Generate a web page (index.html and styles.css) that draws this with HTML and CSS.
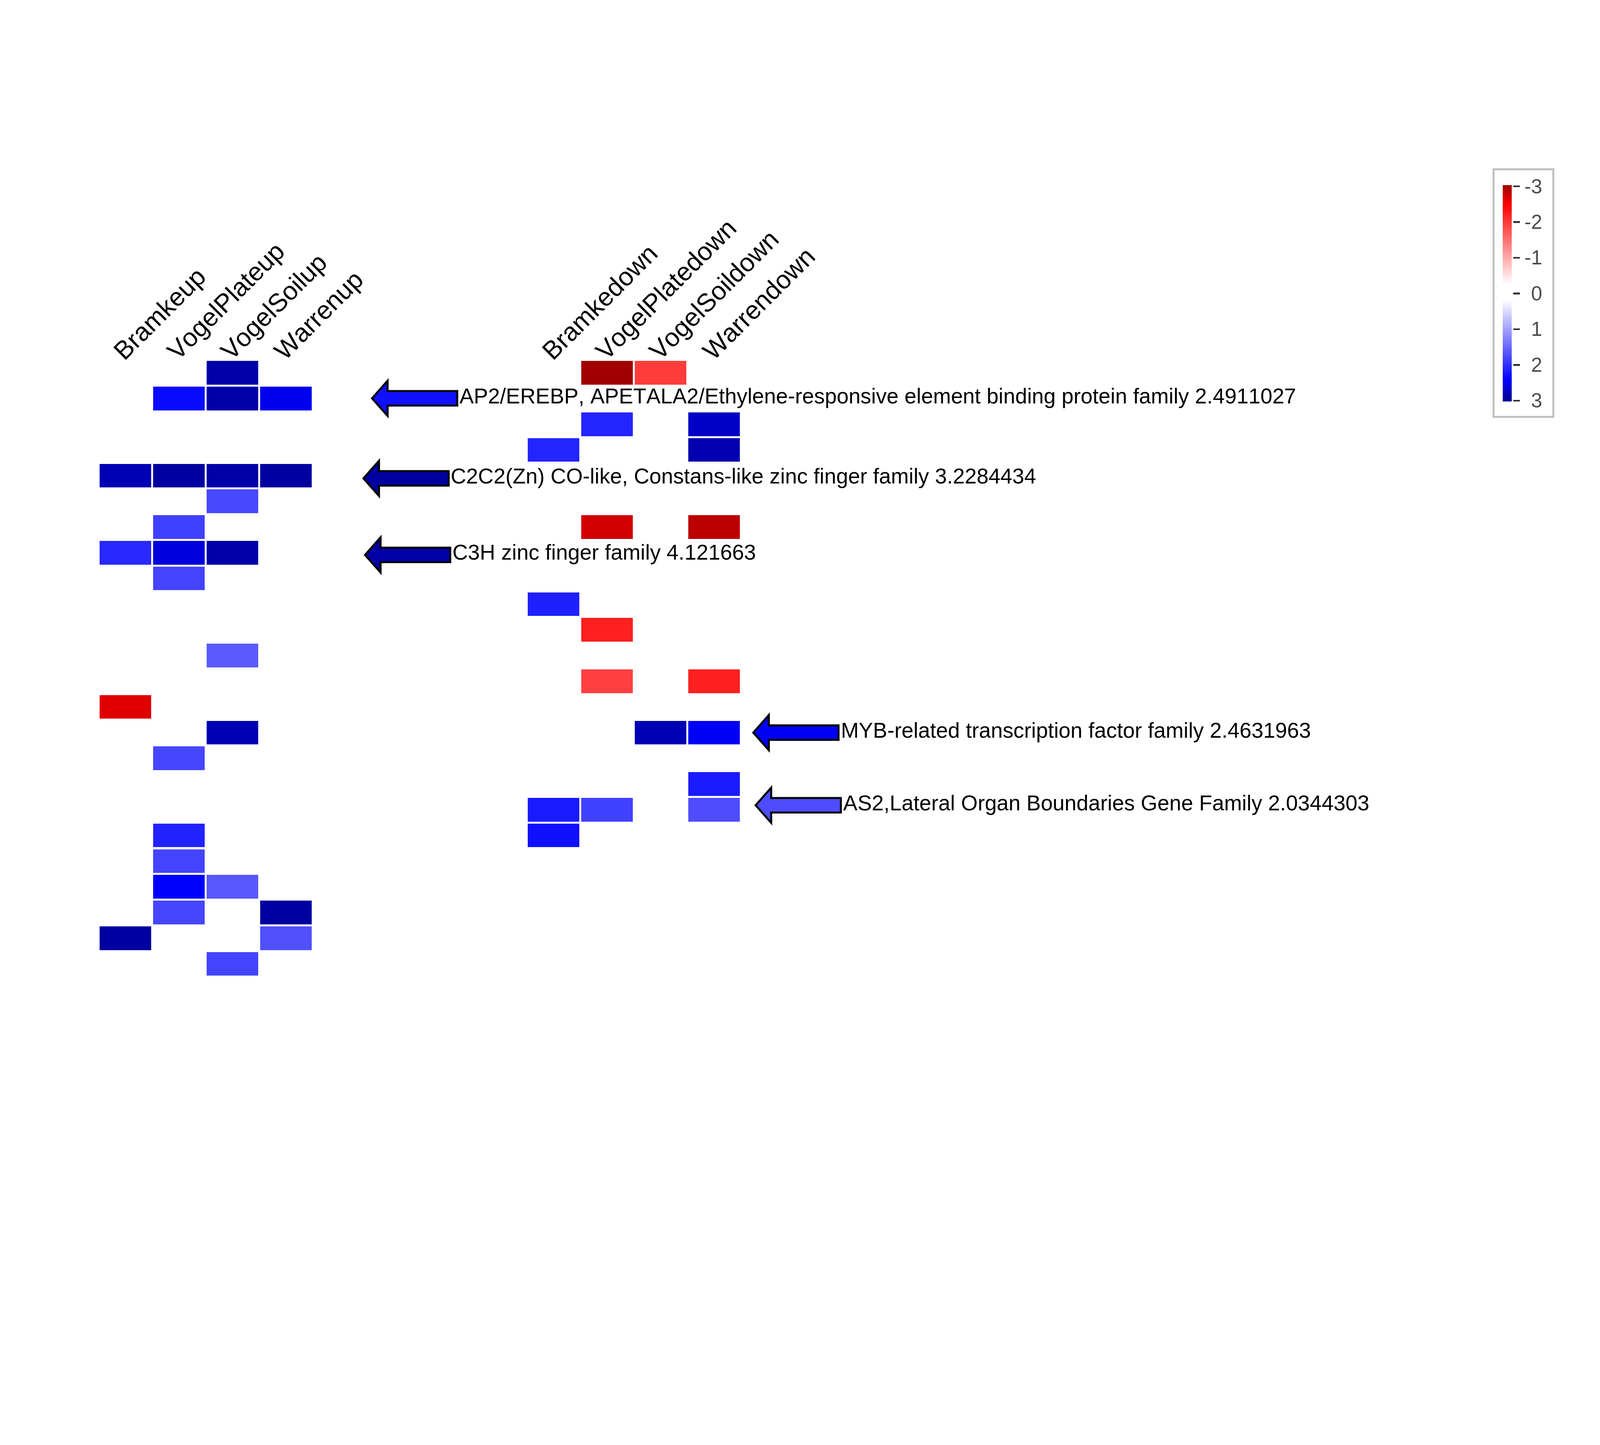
FILE: index.html
```html
<!DOCTYPE html>
<html lang="en">
<head>
<meta charset="utf-8">
<title>Heatmap</title>
<link rel="stylesheet" href="styles.css">
</head>
<body>
<div class="figure">
  <section class="panel panel-left">
    <div class="col-labels">
      <div class="col-label"><span>Bramkeup</span></div>
      <div class="col-label"><span>VogelPlateup</span></div>
      <div class="col-label"><span>VogelSoilup</span></div>
      <div class="col-label"><span>Warrenup</span></div>
    </div>
    <div class="heatmap">
      <div class="cell"></div><div class="cell"></div><div class="cell" style="background:#0000aa"></div><div class="cell"></div>
      <div class="cell"></div><div class="cell" style="background:#0a0aff"></div><div class="cell" style="background:#0000aa"></div><div class="cell" style="background:#0000ee"></div>
      <div class="cell"></div><div class="cell"></div><div class="cell"></div><div class="cell"></div>
      <div class="cell"></div><div class="cell"></div><div class="cell"></div><div class="cell"></div>
      <div class="cell" style="background:#0000b4"></div><div class="cell" style="background:#0000a0"></div><div class="cell" style="background:#0000a6"></div><div class="cell" style="background:#0000a0"></div>
      <div class="cell"></div><div class="cell"></div><div class="cell" style="background:#4848ff"></div><div class="cell"></div>
      <div class="cell"></div><div class="cell" style="background:#4040ff"></div><div class="cell"></div><div class="cell"></div>
      <div class="cell" style="background:#2828ff"></div><div class="cell" style="background:#0000dd"></div><div class="cell" style="background:#0000a8"></div><div class="cell"></div>
      <div class="cell"></div><div class="cell" style="background:#4444ff"></div><div class="cell"></div><div class="cell"></div>
      <div class="cell"></div><div class="cell"></div><div class="cell"></div><div class="cell"></div>
      <div class="cell"></div><div class="cell"></div><div class="cell"></div><div class="cell"></div>
      <div class="cell"></div><div class="cell"></div><div class="cell" style="background:#5a5aff"></div><div class="cell"></div>
      <div class="cell"></div><div class="cell"></div><div class="cell"></div><div class="cell"></div>
      <div class="cell" style="background:#e00000"></div><div class="cell"></div><div class="cell"></div><div class="cell"></div>
      <div class="cell"></div><div class="cell"></div><div class="cell" style="background:#0000b4"></div><div class="cell"></div>
      <div class="cell"></div><div class="cell" style="background:#4646ff"></div><div class="cell"></div><div class="cell"></div>
      <div class="cell"></div><div class="cell"></div><div class="cell"></div><div class="cell"></div>
      <div class="cell"></div><div class="cell"></div><div class="cell"></div><div class="cell"></div>
      <div class="cell"></div><div class="cell" style="background:#2222ff"></div><div class="cell"></div><div class="cell"></div>
      <div class="cell"></div><div class="cell" style="background:#4444ff"></div><div class="cell"></div><div class="cell"></div>
      <div class="cell"></div><div class="cell" style="background:#0000ff"></div><div class="cell" style="background:#5858ff"></div><div class="cell"></div>
      <div class="cell"></div><div class="cell" style="background:#4646ff"></div><div class="cell"></div><div class="cell" style="background:#0000a0"></div>
      <div class="cell" style="background:#0000a0"></div><div class="cell"></div><div class="cell"></div><div class="cell" style="background:#5050ff"></div>
      <div class="cell"></div><div class="cell"></div><div class="cell" style="background:#4444ff"></div><div class="cell"></div>
    </div>
  </section>

  <section class="panel panel-right">
    <div class="col-labels">
      <div class="col-label"><span>Bramkedown</span></div>
      <div class="col-label"><span>VogelPlatedown</span></div>
      <div class="col-label"><span>VogelSoildown</span></div>
      <div class="col-label"><span>Warrendown</span></div>
    </div>
    <div class="heatmap">
      <div class="cell"></div><div class="cell" style="background:#a00000"></div><div class="cell" style="background:#ff3c3c"></div><div class="cell"></div>
      <div class="cell"></div><div class="cell"></div><div class="cell"></div><div class="cell"></div>
      <div class="cell"></div><div class="cell" style="background:#2424ff"></div><div class="cell"></div><div class="cell" style="background:#0000c6"></div>
      <div class="cell" style="background:#2424ff"></div><div class="cell"></div><div class="cell"></div><div class="cell" style="background:#0000b0"></div>
      <div class="cell"></div><div class="cell"></div><div class="cell"></div><div class="cell"></div>
      <div class="cell"></div><div class="cell"></div><div class="cell"></div><div class="cell"></div>
      <div class="cell"></div><div class="cell" style="background:#d20000"></div><div class="cell"></div><div class="cell" style="background:#bd0000"></div>
      <div class="cell"></div><div class="cell"></div><div class="cell"></div><div class="cell"></div>
      <div class="cell"></div><div class="cell"></div><div class="cell"></div><div class="cell"></div>
      <div class="cell" style="background:#2020ff"></div><div class="cell"></div><div class="cell"></div><div class="cell"></div>
      <div class="cell"></div><div class="cell" style="background:#ff2020"></div><div class="cell"></div><div class="cell"></div>
      <div class="cell"></div><div class="cell"></div><div class="cell"></div><div class="cell"></div>
      <div class="cell"></div><div class="cell" style="background:#ff4040"></div><div class="cell"></div><div class="cell" style="background:#ff2020"></div>
      <div class="cell"></div><div class="cell"></div><div class="cell"></div><div class="cell"></div>
      <div class="cell"></div><div class="cell"></div><div class="cell" style="background:#0000b4"></div><div class="cell" style="background:#0000f5"></div>
      <div class="cell"></div><div class="cell"></div><div class="cell"></div><div class="cell"></div>
      <div class="cell"></div><div class="cell"></div><div class="cell"></div><div class="cell" style="background:#1a1aff"></div>
      <div class="cell" style="background:#1a1aff"></div><div class="cell" style="background:#4040ff"></div><div class="cell"></div><div class="cell" style="background:#4d4dff"></div>
      <div class="cell" style="background:#1010ff"></div><div class="cell"></div><div class="cell"></div><div class="cell"></div>
      <div class="cell"></div><div class="cell"></div><div class="cell"></div><div class="cell"></div>
      <div class="cell"></div><div class="cell"></div><div class="cell"></div><div class="cell"></div>
      <div class="cell"></div><div class="cell"></div><div class="cell"></div><div class="cell"></div>
      <div class="cell"></div><div class="cell"></div><div class="cell"></div><div class="cell"></div>
      <div class="cell"></div><div class="cell"></div><div class="cell"></div><div class="cell"></div>
    </div>
  </section>

  <aside class="legend">
    <div class="legend-bar"></div>
    <div class="legend-scale">
      <div class="tick-row"><span class="tick"></span><span class="tick-label">-3</span></div>
      <div class="tick-row"><span class="tick"></span><span class="tick-label">-2</span></div>
      <div class="tick-row"><span class="tick"></span><span class="tick-label">-1</span></div>
      <div class="tick-row"><span class="tick"></span><span class="tick-label">0</span></div>
      <div class="tick-row"><span class="tick"></span><span class="tick-label">1</span></div>
      <div class="tick-row"><span class="tick"></span><span class="tick-label">2</span></div>
      <div class="tick-row"><span class="tick"></span><span class="tick-label">3</span></div>
    </div>
  </aside>

  <div class="note note-ap2">
    <svg class="arrow" viewBox="0 0 302 134"><polygon points="4.7,67 58,6.5 58,42 297.5,42 297.5,92 58,92 58,127.5" fill="#1010ff"/></svg>
    <span class="note-text">AP2/EREBP, APETALA2/Ethylene-responsive element binding protein family 2.4911027</span>
  </div>
  <div class="note note-c2c2">
    <svg class="arrow" viewBox="0 0 302 134"><polygon points="4.7,67 58,6.5 58,42 297.5,42 297.5,92 58,92 58,127.5" fill="#0000a0"/></svg>
    <span class="note-text">C2C2(Zn) CO-like, Constans-like zinc finger family 3.2284434</span>
  </div>
  <div class="note note-c3h">
    <svg class="arrow" viewBox="0 0 302 134"><polygon points="4.7,67 58,6.5 58,42 297.5,42 297.5,92 58,92 58,127.5" fill="#0000a4"/></svg>
    <span class="note-text">C3H zinc finger family 4.121663</span>
  </div>
  <div class="note note-myb">
    <svg class="arrow" viewBox="0 0 302 134"><polygon points="4.7,67 58,6.5 58,42 297.5,42 297.5,92 58,92 58,127.5" fill="#0000f5"/></svg>
    <span class="note-text">MYB-related transcription factor family 2.4631963</span>
  </div>
  <div class="note note-as2">
    <svg class="arrow" viewBox="0 0 302 134"><polygon points="4.7,67 58,6.5 58,42 297.5,42 297.5,92 58,92 58,127.5" fill="#4d4dff"/></svg>
    <span class="note-text">AS2,Lateral Organ Boundaries Gene Family 2.0344303</span>
  </div>
</div>
</body>
</html>
```

FILE: styles.css
```css
/* One design unit = 1px of the 5499 x 3700 figure, scaled so the figure fits the window width. */
:root {
  --u: calc(100vw / 5499);
}

html {
  margin: 0;
  padding: 0;
  overflow: hidden;
  background: #ffffff;
}

body {
  margin: 0;
  padding: 0;
  width: calc(5499 * var(--u));
  height: calc(3700 * var(--u));
  background: #ffffff;
  font-family: "Liberation Sans", Arial, Helvetica, sans-serif;
  font-kerning: none;
  color: #000000;
}

.figure {
  position: relative;
  width: calc(5499 * var(--u));
  height: calc(3700 * var(--u));
  display: flex;
  align-items: flex-start;
  overflow: hidden;
}

/* ---------- heatmap panels ---------- */
.panel {
  display: flex;
  flex-direction: column;
  flex: none;
  margin-top: calc(841 * var(--u));
}

.panel-left {
  margin-left: calc(342 * var(--u));
}

.panel-right {
  margin-left: calc(743 * var(--u));
}

.col-labels {
  display: grid;
  grid-template-columns: repeat(4, calc(177 * var(--u)));
  column-gap: calc(7 * var(--u));
  height: calc(400 * var(--u));
}

.col-label {
  display: flex;
  align-items: flex-end;
  height: calc(400 * var(--u));
}

.col-label span {
  display: block;
  width: 0;
  white-space: nowrap;
  font-size: calc(88.5 * var(--u));
  line-height: calc(88.5 * var(--u));
  margin-left: calc(86.5 * var(--u));
  margin-bottom: calc(-15.6 * var(--u));
  transform-origin: 0 calc(74.9 * var(--u));
  transform: rotate(-45deg);
}

.heatmap {
  display: grid;
  grid-template-columns: repeat(4, calc(177 * var(--u)));
  grid-template-rows: repeat(24, calc(81.5 * var(--u)));
  column-gap: calc(7 * var(--u));
  row-gap: calc(6.85 * var(--u));
}

.cell {
  background: transparent;
}

/* ---------- colour key ---------- */
.legend {
  box-sizing: border-box;
  flex: none;
  margin-left: calc(2587 * var(--u));
  margin-top: calc(578 * var(--u));
  width: calc(212 * var(--u));
  height: calc(859 * var(--u));
  border: calc(7 * var(--u)) solid #c0c0c0;
  background: #ffffff;
  display: flex;
  align-items: flex-start;
}

.legend-bar {
  flex: none;
  width: calc(31 * var(--u));
  height: calc(743 * var(--u));
  margin-left: calc(28 * var(--u));
  margin-top: calc(52 * var(--u));
  background: linear-gradient(to bottom,
    #9c0000 0%,
    #ff0000 9%,
    #ffffff 46%,
    #ffffff 53%,
    #0000ff 90%,
    #00008b 100%);
}

.legend-scale {
  flex: none;
  margin-left: calc(6 * var(--u));
  margin-top: calc(56 * var(--u));
  height: calc(736.5 * var(--u));
  display: flex;
  flex-direction: column;
  justify-content: space-between;
}

.tick-row {
  height: 0;
  display: flex;
  align-items: center;
}

.tick {
  display: block;
  flex: none;
  width: calc(23 * var(--u));
  height: calc(6 * var(--u));
  background: #333333;
}

.tick-label {
  display: block;
  flex: none;
  width: calc(76 * var(--u));
  text-align: right;
  font-size: calc(69 * var(--u));
  line-height: calc(69 * var(--u));
  color: #4d4d4d;
}

/* ---------- annotations (arrows lying over the plot) ---------- */
.note {
  position: absolute;
  display: flex;
  align-items: flex-start;
}

.arrow {
  display: block;
  flex: none;
  width: calc(302 * var(--u));
  height: calc(134 * var(--u));
  overflow: visible;
}

.arrow polygon {
  stroke: #000000;
  stroke-width: 7;
  stroke-linejoin: miter;
}

.note-text {
  display: block;
  margin-left: calc(3 * var(--u));
  margin-top: calc(22.7 * var(--u));
  font-size: calc(73.6 * var(--u));
  line-height: calc(73.6 * var(--u));
  white-space: nowrap;
}

.note-ap2  { left: calc(1274 * var(--u)); top: calc(1302 * var(--u)); }
.note-c2c2 { left: calc(1244 * var(--u)); top: calc(1578 * var(--u)); }
.note-c3h  { left: calc(1250 * var(--u)); top: calc(1840 * var(--u)); }
.note-myb  { left: calc(2585 * var(--u)); top: calc(2452 * var(--u)); }
.note-as2  { left: calc(2593 * var(--u)); top: calc(2701 * var(--u)); }
```
